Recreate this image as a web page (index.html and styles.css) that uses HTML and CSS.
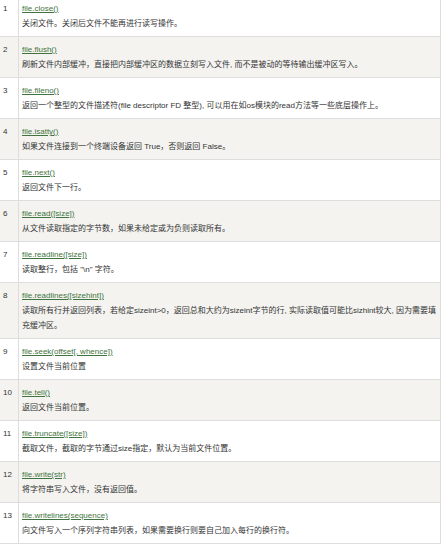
FILE: index.html
```html
<!DOCTYPE html>
<html lang="zh-CN">
<head>
<meta charset="utf-8">
<title>file methods</title>
<link rel="stylesheet" href="styles.css">
</head>
<body>
<table class="ref">
<tbody>
<tr class="odd"><td class="num">1</td><td class="desc"><a href="#">file.close()</a><div>关闭文件。关闭后文件不能再进行读写操作。</div></td></tr>
<tr class="even"><td class="num">2</td><td class="desc"><a href="#">file.flush()</a><div>刷新文件内部缓冲，直接把内部缓冲区的数据立刻写入文件, 而不是被动的等待输出缓冲区写入。</div></td></tr>
<tr class="odd"><td class="num">3</td><td class="desc"><a href="#">file.fileno()</a><div>返回一个整型的文件描述符(file descriptor FD 整型), 可以用在如os模块的read方法等一些底层操作上。</div></td></tr>
<tr class="even"><td class="num">4</td><td class="desc"><a href="#">file.isatty()</a><div>如果文件连接到一个终端设备返回 True，否则返回 False。</div></td></tr>
<tr class="odd"><td class="num">5</td><td class="desc"><a href="#">file.next()</a><div>返回文件下一行。</div></td></tr>
<tr class="even"><td class="num">6</td><td class="desc"><a href="#">file.read([size])</a><div>从文件读取指定的字节数，如果未给定或为负则读取所有。</div></td></tr>
<tr class="odd"><td class="num">7</td><td class="desc"><a href="#">file.readline([size])</a><div>读取整行，包括 "\n" 字符。</div></td></tr>
<tr class="even"><td class="num">8</td><td class="desc"><a href="#">file.readlines([sizehint])</a><div>读取所有行并返回列表，若给定sizeint&gt;0，返回总和大约为sizeint字节的行, 实际读取值可能比sizhint较大, 因为需要填充缓冲区。</div></td></tr>
<tr class="odd"><td class="num">9</td><td class="desc"><a href="#">file.seek(offset[, whence])</a><div>设置文件当前位置</div></td></tr>
<tr class="even"><td class="num">10</td><td class="desc"><a href="#">file.tell()</a><div>返回文件当前位置。</div></td></tr>
<tr class="odd"><td class="num">11</td><td class="desc"><a href="#">file.truncate([size])</a><div>截取文件，截取的字节通过size指定，默认为当前文件位置。</div></td></tr>
<tr class="even"><td class="num">12</td><td class="desc"><a href="#">file.write(str)</a><div>将字符串写入文件，没有返回值。</div></td></tr>
<tr class="odd"><td class="num">13</td><td class="desc"><a href="#">file.writelines(sequence)</a><div>向文件写入一个序列字符串列表，如果需要换行则要自己加入每行的换行符。</div></td></tr>
</tbody>
</table>
</body>
</html>
```

FILE: styles.css
```css
html, body {
  margin: 0;
  padding: 0;
  background: #ffffff;
}

body {
  font-family: "Liberation Sans", Arial, "Noto Sans CJK SC", sans-serif;
  font-size: 8px;
  line-height: 15px;
  color: #333333;
}

.ref {
  border-collapse: collapse;
  width: 441px;
  margin-top: -5px;
  border-right: 1px solid #dddddd;
  border-bottom: 1px solid #dddddd;
}

.ref td {
  vertical-align: top;
  padding: 5px 2px 5px 3px;
  border-top: 1px solid #dddddd;
}

.ref .num {
  width: 15px;
  padding-left: 3px;
  padding-right: 0;
  border-right: 1px solid #dddddd;
}

.ref .desc {
  padding-left: 3px;
}

.ref .odd {
  background: #ffffff;
}

.ref .even {
  background: #f4f3f0;
}

.ref a {
  color: #3f7340;
  text-decoration: underline;
}
```
